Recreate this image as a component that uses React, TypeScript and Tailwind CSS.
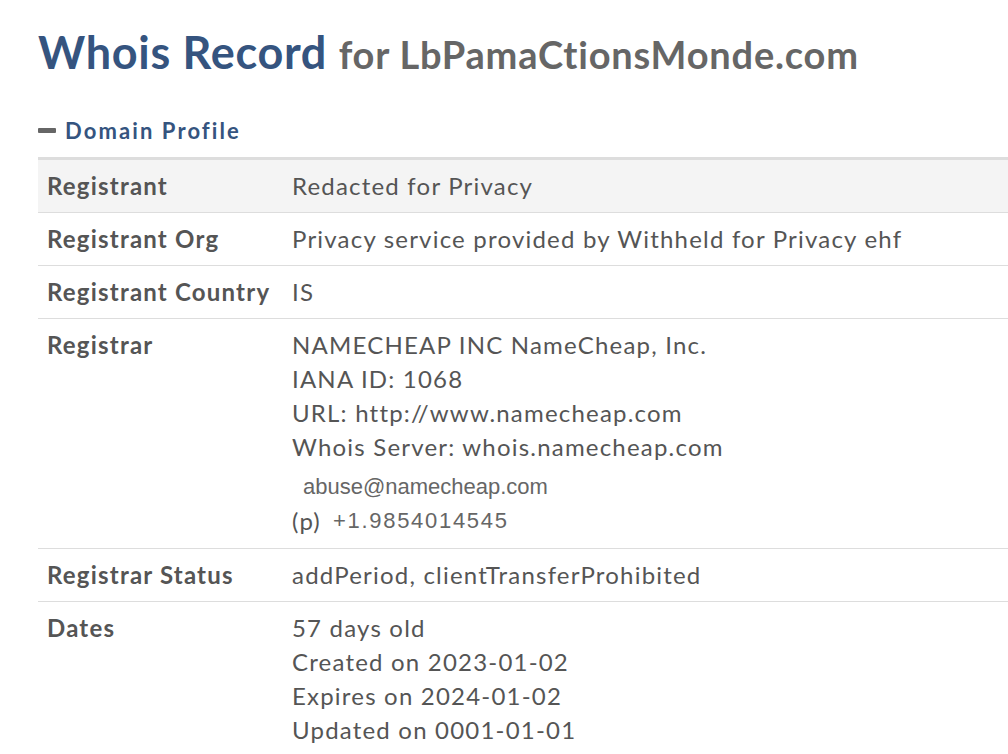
const rows: { label: string; lines: string[]; shaded?: boolean }[] = [
  { label: "Registrant", lines: ["Redacted for Privacy"], shaded: true },
  { label: "Registrant Org", lines: ["Privacy service provided by Withheld for Privacy ehf"] },
  { label: "Registrant Country", lines: ["IS"] },
];

function Row({
  label,
  children,
  shaded,
  extra,
}: {
  label: string;
  children: React.ReactNode;
  shaded?: boolean;
  extra?: string;
}) {
  return (
    <div className={`flex border-b border-[#dddddd] px-[9px] pt-[9px] pb-[9px] ${shaded ? "bg-[#f4f4f4]" : ""} ${extra ?? ""}`}>
      <div className="w-[245px] shrink-0 font-bold">{label}</div>
      <div>{children}</div>
    </div>
  );
}

export default function App() {
  return (
    <div className="min-h-[754px] bg-white pl-[38px] pt-[26px] text-[#555] font-['Lato','Liberation_Sans',sans-serif]">
      <h1 className="font-bold leading-[52px] text-[#35547f] text-[45px] tracking-[0.7px]">
        Whois Record{" "}
        <span className="text-[38px] text-[#666] tracking-[0.8px]">for LbPamaCtionsMonde.com</span>
      </h1>
      <div className="mt-[34px] flex items-center gap-[9px] text-[22px] font-bold text-[#35547f] tracking-[2.1px]">
        <span className="inline-block h-[5px] w-[18px] rounded-[1px] bg-[#666]" />
        Domain Profile
      </div>
      <div className="mt-[10px] border-t-[3px] border-[#dddddd] text-[24px] leading-[34px] tracking-[1.2px]">
        {rows.map((r) => (
          <Row key={r.label} label={r.label} shaded={r.shaded}>
            {r.lines.map((l) => (
              <div key={l}>{l}</div>
            ))}
          </Row>
        ))}
        <Row label="Registrar" extra="pb-[10px]">
          <div>NAMECHEAP INC NameCheap, Inc.</div>
          <div>IANA ID: 1068</div>
          <div>URL: http://www.namecheap.com</div>
          <div>Whois Server: whois.namecheap.com</div>
          <div className="pl-[11px] pt-[4px] h-[40px] leading-[38px] text-[22px] tracking-normal text-[#666] font-['Liberation_Sans',sans-serif]">
            abuse@namecheap.com
          </div>
          <div className="flex items-center">
            <span>(p)</span>
            <span className="ml-[12px] text-[22px] tracking-[1.7px] text-[#666] font-['Liberation_Sans',sans-serif]">
              +1.9854014545
            </span>
          </div>
        </Row>
        <Row label="Registrar Status">
          <div>addPeriod, clientTransferProhibited</div>
        </Row>
        <Row label="Dates">
          <div>57 days old</div>
          <div>Created on 2023-01-02</div>
          <div>Expires on 2024-01-02</div>
          <div>Updated on 0001-01-01</div>
        </Row>
      </div>
    </div>
  );
}
